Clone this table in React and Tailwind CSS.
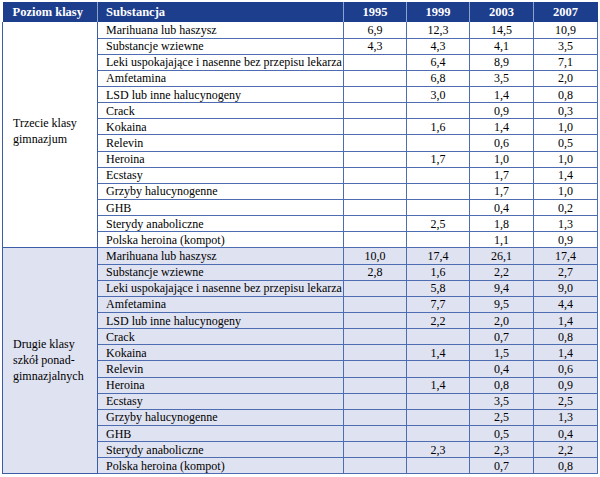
import React from 'react';

const years = ['1995', '1999', '2003', '2007'];

const groups = [
  {
    label: ['Trzecie klasy', 'gimnazjum'],
    bg: 'bg-white',
    labelPad: 'pb-[8px]',
    rows: [
      ['Marihuana lub haszysz', '6,9', '12,3', '14,5', '10,9'],
      ['Substancje wziewne', '4,3', '4,3', '4,1', '3,5'],
      ['Leki uspokajające i nasenne bez przepisu lekarza', '', '6,4', '8,9', '7,1'],
      ['Amfetamina', '', '6,8', '3,5', '2,0'],
      ['LSD lub inne halucynogeny', '', '3,0', '1,4', '0,8'],
      ['Crack', '', '', '0,9', '0,3'],
      ['Kokaina', '', '1,6', '1,4', '1,0'],
      ['Relevin', '', '', '0,6', '0,5'],
      ['Heroina', '', '1,7', '1,0', '1,0'],
      ['Ecstasy', '', '', '1,7', '1,4'],
      ['Grzyby halucynogenne', '', '', '1,7', '1,0'],
      ['GHB', '', '', '0,4', '0,2'],
      ['Sterydy anaboliczne', '', '2,5', '1,8', '1,3'],
      ['Polska heroina (kompot)', '', '', '1,1', '0,9'],
    ],
  },
  {
    label: ['Drugie klasy', 'szkół ponad-', 'gimnazjalnych'],
    bg: 'bg-[#dfe2f1]',
    labelPad: 'pb-[2px]',
    rows: [
      ['Marihuana lub haszysz', '10,0', '17,4', '26,1', '17,4'],
      ['Substancje wziewne', '2,8', '1,6', '2,2', '2,7'],
      ['Leki uspokajające i nasenne bez przepisu lekarza', '', '5,8', '9,4', '9,0'],
      ['Amfetamina', '', '7,7', '9,5', '4,4'],
      ['LSD lub inne halucynogeny', '', '2,2', '2,0', '1,4'],
      ['Crack', '', '', '0,7', '0,8'],
      ['Kokaina', '', '1,4', '1,5', '1,4'],
      ['Relevin', '', '', '0,4', '0,6'],
      ['Heroina', '', '1,4', '0,8', '0,9'],
      ['Ecstasy', '', '', '3,5', '2,5'],
      ['Grzyby halucynogenne', '', '', '2,5', '1,3'],
      ['GHB', '', '', '0,5', '0,4'],
      ['Sterydy anaboliczne', '', '2,3', '2,3', '2,2'],
      ['Polska heroina (kompot)', '', '', '0,7', '0,8'],
    ],
  },
];

export default function App() {
  return (
    <div className="w-[600px] h-[477px] bg-white pt-[2px] pl-[2px] font-['Liberation_Serif','Times_New_Roman',serif]">
      <table className="border-collapse w-[595px] table-fixed text-[12px] leading-none text-black">
        <colgroup>
          <col className="w-[95px]" />
          <col className="w-[246px]" />
          <col className="w-[63px]" />
          <col className="w-[63px]" />
          <col className="w-[64px]" />
          <col className="w-[64px]" />
        </colgroup>
        <thead>
          <tr className="h-[20px] bg-[#1d3d8d] text-white font-bold text-[12.5px]">
            <th className="text-left pl-[10px] border-r border-[#8ea2d0]">Poziom klasy</th>
            <th className="text-left pl-[8px] border-r border-[#8ea2d0]">Substancja</th>
            {years.map((y) => (
              <th key={y} className="text-center border-r border-[#8ea2d0] last:border-r-[#1d3d8d]">{y}</th>
            ))}
          </tr>
        </thead>
        {groups.map((g, gi) => (
          <tbody key={gi} className={g.bg}>
            {g.rows.map((r, i) => (
              <tr key={i} className="h-[16.15px]">
                {i === 0 && (
                  <td rowSpan={g.rows.length} className={`align-middle pl-[10px] text-[12px] leading-[16px] border-l border-r border-b border-[#3c5ca8] ${g.labelPad}`}>
                    {g.label.map((l) => (
                      <div key={l}>{l}</div>
                    ))}
                  </td>
                )}
                <td className="pl-[8px] border-b border-r border-[#4e6cb2] whitespace-nowrap">{r[0]}</td>
                {r.slice(1).map((v, j) => (
                  <td key={j} className="text-center border-b border-r border-[#4e6cb2]">{v}</td>
                ))}
              </tr>
            ))}
          </tbody>
        ))}
      </table>
    </div>
  );
}
